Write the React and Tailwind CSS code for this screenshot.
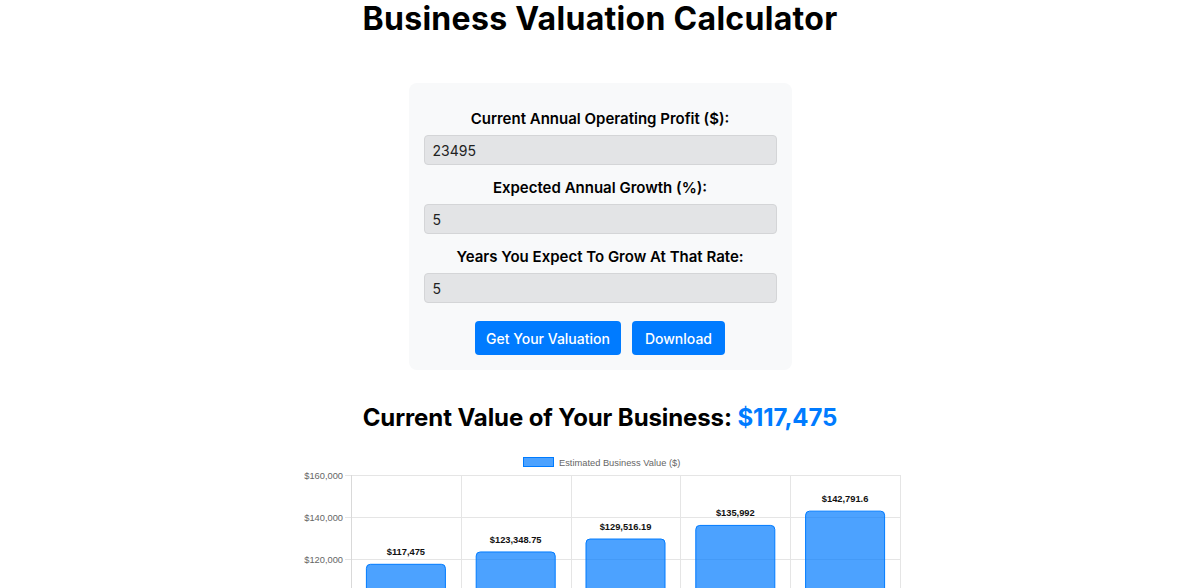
import React from "react";

const values = [117475, 123348.75, 129516.19, 135992, 142791.6];
const labels = ["$117,475", "$123,348.75", "$129,516.19", "$135,992", "$142,791.6"];

function Chart() {
  const left = 351;
  const top = 476;
  const step = 42;
  const colW = 109.8;
  const fs = 9.3;
  const ff = "Liberation Sans, Arial, sans-serif";
  const yFor = (v) => top + ((160000 - v) / 20000) * step;
  return (
    <svg width="1200" height="140" viewBox="0 450 1200 140" className="block">
      <rect x="523.5" y="458.5" width="30" height="9" fill="rgba(0,123,255,0.7)" stroke="#007bff" strokeWidth="1" />
      <text x="559" y="466.5" fontSize={fs} fill="#666" fontFamily={ff}>
        Estimated Business Value ($)
      </text>
      {[0, 1, 2, 3].map((i) => (
        <line key={"h" + i} x1={left - 6} x2={900} y1={top + i * step + 0.5} y2={top + i * step + 0.5} stroke="#e5e5e5" strokeWidth="1" />
      ))}
      {[0, 1, 2, 3, 4, 5].map((i) => (
        <line key={"v" + i} x1={Math.round(left + i * colW) + 0.5} x2={Math.round(left + i * colW) + 0.5} y1={top} y2={600} stroke={i === 0 ? "#d9d9d9" : "#e5e5e5"} strokeWidth="1" />
      ))}
      {["$160,000", "$140,000", "$120,000"].map((t, i) => (
        <text key={t} x={left - 8} y={top + i * step + 3.5} fontSize={fs} fill="#666" textAnchor="end" fontFamily={ff}>
          {t}
        </text>
      ))}
      {values.map((v, i) => {
        const cx = left + i * colW + colW / 2;
        const y = yFor(v);
        const w = 79;
        const x = cx - w / 2;
        const r = 4;
        return (
          <g key={i}>
            <path
              d={`M${x} 600 L${x} ${y + r} Q${x} ${y} ${x + r} ${y} L${x + w - r} ${y} Q${x + w} ${y} ${x + w} ${y + r} L${x + w} 600 Z`}
              fill="rgba(0,123,255,0.7)"
              stroke="#007bff"
              strokeWidth="1"
            />
            <text x={cx} y={y - 9} fontSize={fs} fontWeight="bold" fill="#111" textAnchor="middle" fontFamily={ff}>
              {labels[i]}
            </text>
          </g>
        );
      })}
    </svg>
  );
}

export default function App() {
  return (
    <div className="w-[1200px] h-[588px] overflow-hidden bg-white text-black" style={{ fontFamily: "Inter, 'Noto Sans', sans-serif" }}>
      <h1 className="text-[32px] leading-[38px] font-bold text-center tracking-[0.3px]">Business Valuation Calculator</h1>
      <div className="mt-[45px] mx-auto w-[383px] bg-[#f8f9fa] rounded-lg px-[15px] pt-[26px] pb-[15px]">
        <Field label="Current Annual Operating Profit ($):" value="23495" />
        <Field label="Expected Annual Growth (%):" value="5" />
        <Field label="Years You Expect To Grow At That Rate:" value="5" />
        <div className="flex justify-center gap-[11px] mt-[18px]">
          <button className="h-[34px] px-[11px] bg-[#007bff] text-white rounded-[4px] text-[14px] font-medium">Get Your Valuation</button>
          <button className="h-[34px] px-[13px] bg-[#007bff] text-white rounded-[4px] text-[14px] font-medium">Download</button>
        </div>
      </div>
      <h2 className="text-[24px] leading-[30px] font-bold text-center mt-[33px] tracking-[-0.1px]">
        Current Value of Your Business: <span className="text-[#007bff]">$117,475</span>
      </h2>
      <div className="mt-[16px]">
        <Chart />
      </div>
    </div>
  );
}

function Field({ label, value }) {
  return (
    <div className="mb-[13px]">
      <div className="text-center text-[15px] font-semibold leading-[20px] mb-[6px]">{label}</div>
      <div className="h-[30px] bg-[#e3e4e6] border border-[#d4d5d7] rounded-[4px] flex items-center px-[8px] text-[14px] text-[#222]">{value}</div>
    </div>
  );
}
